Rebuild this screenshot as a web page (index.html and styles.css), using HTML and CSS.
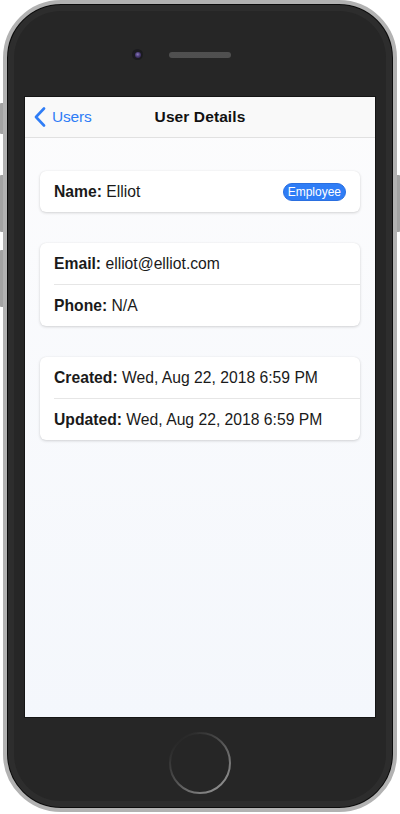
FILE: index.html
```html
<!DOCTYPE html>
<html>
<head>
<meta charset="utf-8">
<link rel="stylesheet" href="styles.css">
</head>
<body>
<div class="stage">
  <div class="btn btn-l1"></div>
  <div class="btn btn-l2"></div>
  <div class="btn btn-l3"></div>
  <div class="btn btn-r1"></div>
  <div class="device">
    <div class="bezel-top">
      <div class="camera"><div class="lens"></div></div>
      <div class="speaker"></div>
    </div>
    <div class="screen">
      <div class="navbar">
        <div class="back">
          <svg class="chev" width="12" height="20" viewBox="0 0 12 20"><path d="M10 1.5 L2 10 L10 18.5" fill="none" stroke="#2f7df6" stroke-width="2.6" stroke-linecap="round" stroke-linejoin="round"/></svg>
          <span>Users</span>
        </div>
        <div class="title">User Details</div>
      </div>
      <div class="content">
        <div class="card">
          <div class="row row-split">
            <span><b>Name:</b> Elliot</span>
            <span class="badge">Employee</span>
          </div>
        </div>
        <div class="card">
          <div class="row"><span><b>Email:</b> elliot@elliot.com</span></div>
          <div class="row"><span><b>Phone:</b> N/A</span></div>
        </div>
        <div class="card">
          <div class="row"><span><b>Created:</b> Wed, Aug 22, 2018 6:59 PM</span></div>
          <div class="row"><span><b>Updated:</b> Wed, Aug 22, 2018 6:59 PM</span></div>
        </div>
      </div>
    </div>
    <div class="bezel-bottom">
      <svg class="home" width="64" height="64" viewBox="0 0 64 64">
        <defs>
          <linearGradient id="hg" x1="0.15" y1="0.1" x2="0.85" y2="0.9">
            <stop offset="0" stop-color="#262626"/>
            <stop offset="0.4" stop-color="#4a4a4a"/>
            <stop offset="1" stop-color="#8c8c8c"/>
          </linearGradient>
        </defs>
        <circle cx="32" cy="32" r="30" fill="none" stroke="url(#hg)" stroke-width="2"/>
      </svg>
    </div>
  </div>
</div>
</body>
</html>
```
FILE: styles.css
```css
* { box-sizing: border-box; }
html, body { margin: 0; padding: 0; background: #ffffff; }
body { font-family: "Liberation Sans", Arial, sans-serif; }

.stage {
  position: relative;
  width: 400px;
  height: 814px;
}

.btn {
  position: absolute;
  width: 4px;
  background: #a3a3a3;
  border-radius: 1px;
}
.btn-l1 { left: 0; top: 103px; height: 31px; }
.btn-l2 { left: 0; top: 175px; height: 57px; }
.btn-l3 { left: 0; top: 250px; height: 57px; }
.btn-r1 { left: 396px; top: 175px; height: 57px; }

.device {
  position: relative;
  margin-left: 3px;
  width: 394px;
  height: 812px;
  border: 4px solid #b2b2b2;
  border-radius: 58px;
  background: #262626;
  box-shadow: inset 0 0 0 1px #0c0c0c, inset 0 0 0 7px #2d2d2d;
  display: flex;
  flex-direction: column;
  align-items: center;
}

.bezel-top {
  height: 93px;
  width: 100%;
  display: flex;
  align-items: flex-start;
  padding-top: 44px;
  padding-left: 125px;
  gap: 26px;
}

.camera {
  width: 11px;
  height: 11px;
  border-radius: 50%;
  background: #1b1b1f;
  display: flex;
  align-items: center;
  justify-content: center;
  margin-top: 1px;
}
.lens {
  width: 6px;
  height: 6px;
  border-radius: 50%;
  background: radial-gradient(circle at 45% 40%, #8a7ab8 0, #4b3c78 45%, #241c3a 100%);
}

.speaker {
  width: 62px;
  height: 6px;
  margin-top: 4px;
  border-radius: 3px;
  background-color: #444;
  background-image: radial-gradient(circle, #5c5c5c 0.6px, transparent 0.8px);
  background-size: 2px 2px;
}

.screen {
  width: 350px;
  height: 620px;
  background: linear-gradient(#fcfcfd, #f4f7fc);
  display: flex;
  flex-direction: column;
  box-shadow: 0 0 0 1px #151515;
}

.navbar {
  height: 41px;
  flex: none;
  background: #f9f9f9;
  border-bottom: 1px solid #e1e1e1;
  position: relative;
  display: flex;
  align-items: center;
  justify-content: center;
}
.back {
  position: absolute;
  left: 9px;
  top: 0;
  height: 40px;
  display: flex;
  align-items: center;
  gap: 6px;
  color: #2f7df6;
  font-size: 15.5px;
  letter-spacing: -0.2px;
}
.chev { display: block; }
.title {
  font-size: 15.5px;
  font-weight: bold;
  color: #111;
  letter-spacing: 0.1px;
}

.content {
  padding: 33px 15px 0;
  display: flex;
  flex-direction: column;
  gap: 31px;
}

.card {
  background: #ffffff;
  border-radius: 6px;
  box-shadow: 0 1px 3px rgba(0,0,0,0.16), 0 0 1px rgba(0,0,0,0.08);
  padding-left: 14px;
  display: flex;
  flex-direction: column;
}

.row {
  height: 41px;
  display: flex;
  align-items: center;
  font-size: 15.7px;
  color: #1a1a1a;
  padding-right: 14px;
}
.row + .row {
  border-top: 1px solid #e6e6e6;
  height: 42px;
}
.row b { font-weight: bold; }
.row-split { justify-content: space-between; }

.badge {
  background: #2f7df6;
  color: #fff;
  font-size: 12px;
  height: 18px;
  padding: 0 4px;
  border-radius: 9px;
  display: flex;
  align-items: center;
  border: 1px solid #2a6fe0;
}

.bezel-bottom {
  flex: 1;
  width: 100%;
  display: flex;
  justify-content: center;
  padding-top: 14px;
}
.home { display: block; }
```
